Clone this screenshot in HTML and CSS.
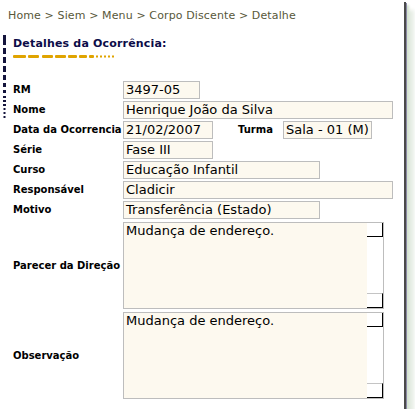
FILE: index.html
```html
<!DOCTYPE html>
<html lang="pt">
<head>
<meta charset="utf-8">
<title>Detalhes da Ocorrência</title>
<link rel="stylesheet" href="styles.css">
</head>
<body>
<div class="frame">
  <div class="crumb">Home &gt; Siem &gt; Menu &gt; Corpo Discente &gt; Detalhe</div>
  <div class="main">
    <svg class="vbar" width="3" height="84" viewBox="0 0 3 84">
      <g fill="#14143c">
        <rect x="0" y="0" width="3" height="10"/>
        <rect x="0" y="13" width="3" height="6"/>
        <rect x="0" y="22" width="3" height="6"/>
        <rect x="0" y="31" width="3" height="6"/>
        <rect x="0" y="40" width="3" height="5"/>
        <rect x="0" y="48" width="3" height="4"/>
        <rect x="0" y="55" width="3" height="3"/>
        <rect x="0" y="61" width="3" height="2"/>
        <rect x="0" y="65" width="3" height="2"/>
        <rect x="0" y="69" width="3" height="2"/>
        <rect x="0.5" y="73" width="2" height="2"/>
        <rect x="0.5" y="77" width="2" height="2"/>
        <rect x="0.5" y="81" width="2" height="2"/>
      </g>
    </svg>
    <div class="content">
      <h1 class="title">Detalhes da Ocorrência:</h1>
      <svg class="uline" width="104" height="3" viewBox="0 0 104 3">
        <g fill="#e0a400">
          <rect x="0" y="0" width="13" height="3" rx="1"/>
          <rect x="15" y="0" width="11" height="3" rx="1"/>
          <rect x="29" y="0" width="11" height="3" rx="1"/>
          <rect x="42" y="0" width="11" height="3" rx="1"/>
          <rect x="55" y="0" width="9" height="3" rx="1"/>
          <rect x="66" y="0" width="8" height="3" rx="1"/>
          <rect x="76" y="0" width="5" height="3" rx="1"/>
          <rect x="83" y="0.5" width="2" height="2"/>
          <rect x="87" y="0.5" width="2" height="2"/>
          <rect x="91" y="0.5" width="2" height="2"/>
          <rect x="95" y="0.5" width="2" height="2"/>
          <rect x="99" y="0.5" width="2" height="2"/>
        </g>
      </svg>
      <div class="form">
        <div class="row"><span class="lbl">RM</span><span class="fld w-rm">3497-05</span></div>
        <div class="row"><span class="lbl">Nome</span><span class="fld w-full">Henrique João da Silva</span></div>
        <div class="row"><span class="lbl">Data da Ocorrencia</span><span class="fld w-date">21/02/2007</span><span class="lbl lbl-inline">Turma</span><span class="fld w-turma">Sala - 01 (M)</span></div>
        <div class="row"><span class="lbl">Série</span><span class="fld w-date">Fase III</span></div>
        <div class="row"><span class="lbl">Curso</span><span class="fld w-mid">Educação Infantil</span></div>
        <div class="row"><span class="lbl">Responsável</span><span class="fld w-full">Cladicir</span></div>
        <div class="row"><span class="lbl">Motivo</span><span class="fld w-mid">Transferência (Estado)</span></div>
        <div class="row tall first"><span class="lbl">Parecer da Direção</span>
          <div class="ta"><div class="ta-text">Mudança de endereço.</div><div class="sb"><span class="sb-btn up"></span><span class="sb-btn down"></span></div></div>
        </div>
        <div class="row tall"><span class="lbl">Observação</span>
          <div class="ta"><div class="ta-text">Mudança de endereço.</div><div class="sb"><span class="sb-btn up"></span><span class="sb-btn down"></span></div></div>
        </div>
      </div>
    </div>
  </div>
</div>
</body>
</html>
```
FILE: styles.css
```css
html, body {
  margin: 0;
  padding: 0;
  background: #ffffff;
}

body {
  font-family: "DejaVu Sans", Verdana, sans-serif;
}

.frame {
  box-sizing: border-box;
  width: 404px;
  height: 409px;
  background: #ffffff;
  box-shadow: 2px 2px 0 #4a4a4a, 3px 3px 0 #8a88a4, 5px 5px 2px #d3e3cf, 10px 10px 4px #e6ede4;
  overflow: hidden;
}

.crumb {
  margin: 9px 0 0 8px;
  font-size: 11px;
  line-height: 13px;
  letter-spacing: 0.12px;
  color: #58583a;
  white-space: nowrap;
}

.main {
  display: grid;
  grid-template-columns: 3px 1fr;
  column-gap: 7px;
  padding-left: 3px;
  margin-top: 13px;
  align-items: start;
}

.vbar {
  display: block;
}

.content {
  padding-top: 2px;
}

.title {
  margin: 0;
  font-size: 11px;
  line-height: 13px;
  letter-spacing: 0.18px;
  font-weight: bold;
  color: #0c0c48;
}

.uline {
  display: block;
  margin-top: 5px;
}

.form {
  margin-top: 22px;
  display: flex;
  flex-direction: column;
}

.row {
  display: flex;
  align-items: center;
  height: 20px;
}

.row.tall {
  height: auto;
  margin-top: 3px;
}

.row.tall.first {
  margin-top: 2px;
}

.lbl {
  flex: none;
  width: 110px;
  font-size: 10px;
  line-height: 12px;
  font-weight: bold;
  color: #000000;
  white-space: nowrap;
}

.lbl-inline {
  width: auto;
  margin: 0 10px 0 25px;
}

.fld {
  flex: none;
  box-sizing: border-box;
  height: 18px;
  border: 1px solid #bdbdbd;
  background: #fdf9ef;
  padding: 0 2px;
  font-size: 13px;
  line-height: 16px;
  color: #000000;
  white-space: nowrap;
  overflow: hidden;
}

.w-rm { width: 77px; }
.w-date { width: 90px; }
.w-turma { width: 89px; }
.w-mid { width: 197px; }
.w-full { width: 270px; }

.ta {
  flex: none;
  box-sizing: border-box;
  width: 261px;
  height: 87px;
  border: 1px solid #bdbdbd;
  background: #fdf9ef;
  display: flex;
}

.ta-text {
  flex: 1;
  padding: 0 2px;
  font-size: 13px;
  line-height: 15px;
  color: #000000;
}

.sb {
  flex: none;
  width: 16px;
  background: #ffffff;
  display: flex;
  flex-direction: column;
  justify-content: space-between;
}

.sb-btn {
  display: block;
  box-sizing: border-box;
  width: 16px;
  background: #ffffff;
  border-right: 1px solid #000000;
  border-bottom: 1px solid #000000;
}

.sb-btn.up {
  height: 14px;
}

.sb-btn.down {
  height: 15px;
  border-top: 1px solid #c4c4c4;
}
```
